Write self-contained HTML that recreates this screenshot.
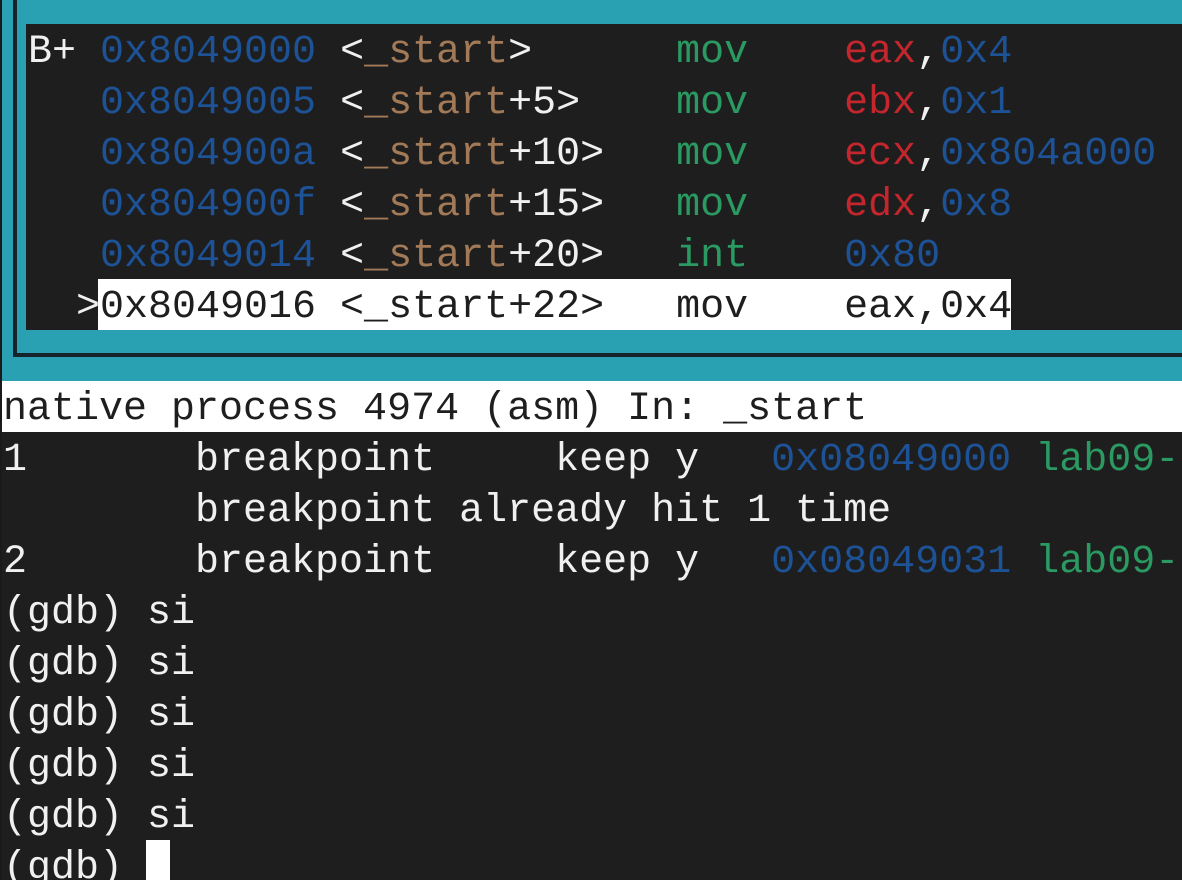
<!DOCTYPE html>
<html><head><meta charset="utf-8"><style>
html,body{margin:0;padding:0;width:1182px;height:880px;overflow:hidden;background:#1e1e1e}
body{position:relative;font-family:"Liberation Mono","DejaVu Sans Mono",monospace;font-size:40px;line-height:51px;color:#f0f0f0}
.teal{position:absolute;left:0;top:0;width:1182px;height:381px;background:#29a1b3}
.vl{position:absolute;left:13px;top:0;width:4px;height:357px;background:#15232b}
.hl{position:absolute;left:13px;top:353px;width:1169px;height:4px;background:#15232b}
.edge{position:absolute;left:0;top:0;width:2px;height:880px;background:#1a1a1a}
.panel{position:absolute;left:26px;top:24px;width:1156px;height:306px;background:#1e1e1e}
.hibox{position:absolute;left:98px;top:279px;width:913px;height:51px;background:#fff}
.row{position:absolute;white-space:pre;height:51px}
.b{color:#1d5296}.br{color:#a27a57}.g{color:#2a9a62}.r{color:#c4262d}.w{color:#f0f0f0}
.hi{color:#1e1e1e}
.status{position:absolute;left:0;top:381px;width:1182px;height:51px;background:#fff;color:#1e1e1e}
.cur{position:absolute;left:146px;top:840px;width:24px;height:40px;background:#fff}
</style></head><body>
<div class="teal"></div><div class="vl"></div><div class="hl"></div>
<div class="panel"></div>
<div class="hibox"></div>
<div class="row" style="left:28px;top:27px">B+ <span class="b">0x8049000</span> &lt;<span class="br">_start</span>&gt;      <span class="g">mov</span>    <span class="r">eax</span>,<span class="b">0x4</span></div>
<div class="row" style="left:28px;top:78px">   <span class="b">0x8049005</span> &lt;<span class="br">_start</span>+5&gt;    <span class="g">mov</span>    <span class="r">ebx</span>,<span class="b">0x1</span></div>
<div class="row" style="left:28px;top:129px">   <span class="b">0x804900a</span> &lt;<span class="br">_start</span>+10&gt;   <span class="g">mov</span>    <span class="r">ecx</span>,<span class="b">0x804a000</span></div>
<div class="row" style="left:28px;top:180px">   <span class="b">0x804900f</span> &lt;<span class="br">_start</span>+15&gt;   <span class="g">mov</span>    <span class="r">edx</span>,<span class="b">0x8</span></div>
<div class="row" style="left:28px;top:231px">   <span class="b">0x8049014</span> &lt;<span class="br">_start</span>+20&gt;   <span class="g">int</span>    <span class="b">0x80</span></div>
<div class="row" style="left:28px;top:282px">  &gt;<span class="hi">0x8049016 &lt;_start+22&gt;   mov    eax,0x4</span></div>
<div class="status"><div class="row" style="left:3px;top:3px">native process 4974 (asm) In: _start</div></div>
<div class="row" style="left:3px;top:435px">1       breakpoint     keep y   <span class="b">0x08049000</span> <span class="g">lab09-2</span></div>
<div class="row" style="left:3px;top:486px">        breakpoint already hit 1 time</div>
<div class="row" style="left:3px;top:537px">2       breakpoint     keep y   <span class="b">0x08049031</span> <span class="g">lab09-2</span></div>
<div class="row" style="left:3px;top:588px">(gdb) si</div>
<div class="row" style="left:3px;top:639px">(gdb) si</div>
<div class="row" style="left:3px;top:690px">(gdb) si</div>
<div class="row" style="left:3px;top:741px">(gdb) si</div>
<div class="row" style="left:3px;top:792px">(gdb) si</div>
<div class="row" style="left:3px;top:843px">(gdb) </div>
<div class="cur"></div>
<div class="edge"></div>
</body></html>
